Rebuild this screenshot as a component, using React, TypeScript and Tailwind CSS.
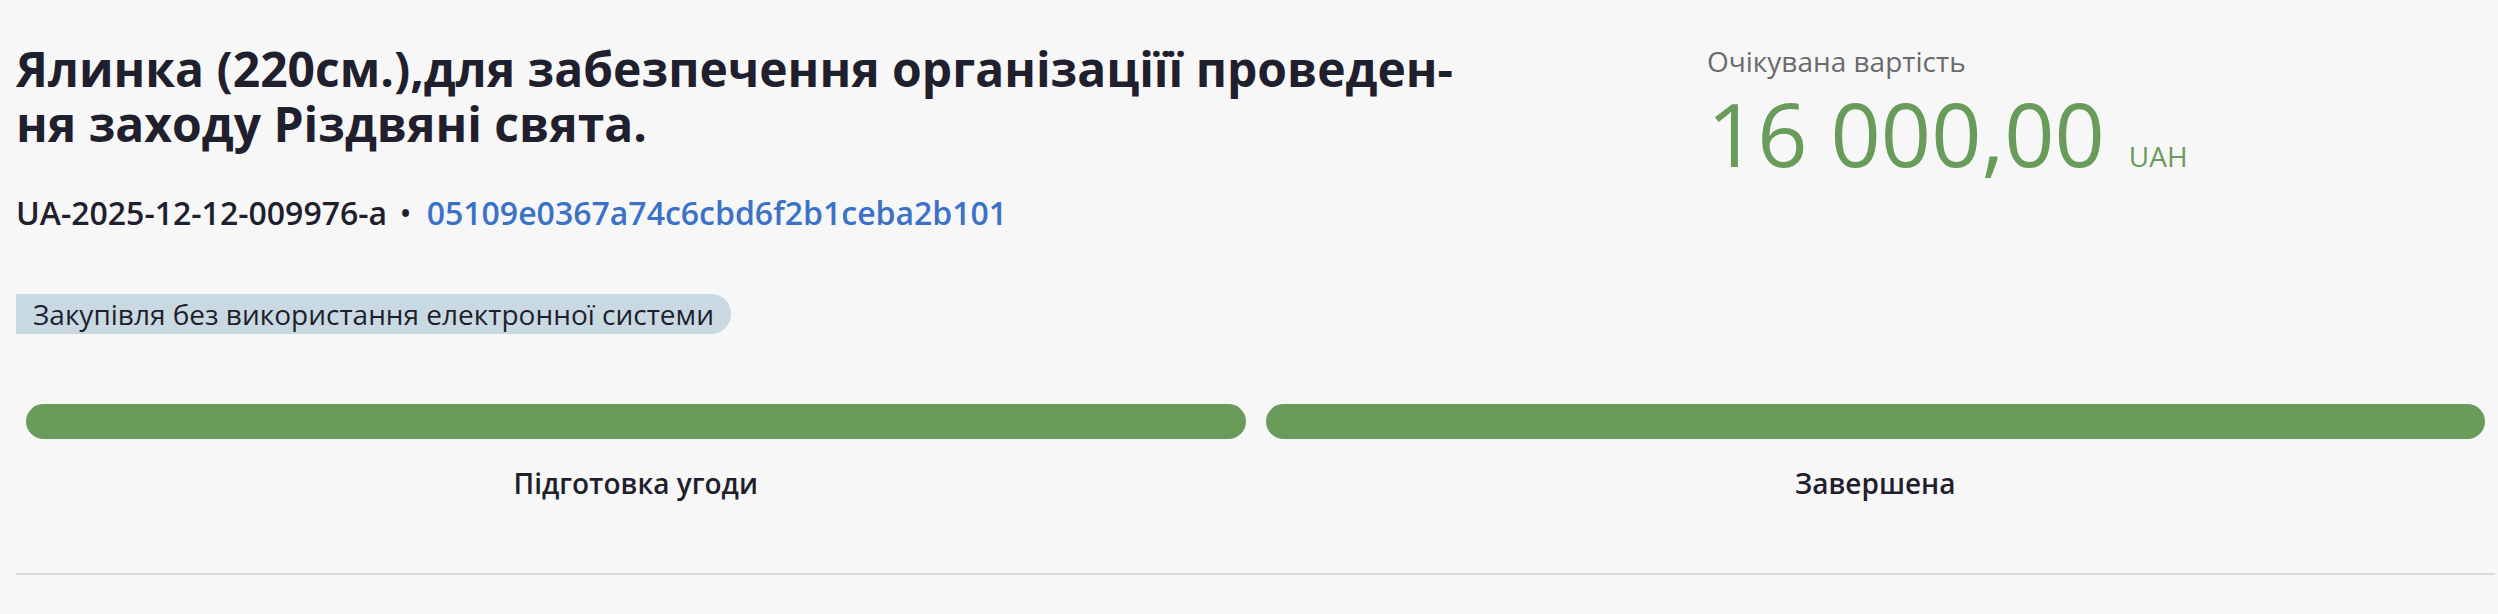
import React from "react";

export default function App() {
  const font = { fontFamily: '"Open Sans", "Noto Sans", sans-serif' };
  return (
    <div className="min-h-[614px] w-full bg-[#f7f7f7] text-[#1f1f2e]" style={font}>
      <div className="pl-[16px] pr-[3px]">
        <div className="flex">
          <div className="flex-1 pt-[41px]">
            <h1 className="text-[48px] font-bold leading-[55px] text-[#1f1f2e]">
              Ялинка (220см.),для забезпечення організаціїї проведен-
              <br />
              ня заходу Різдвяні свята.
            </h1>
            <div className="mt-[38px] flex items-center text-[32px] font-semibold leading-[48px]">
              <span>UA-2025-12-12-009976-a</span>
              <span className="ml-[13px] mr-[16px] text-[28px]">•</span>
              <span className="text-[#3b72c8]">05109e0367a74c6cbd6f2b1ceba2b101</span>
            </div>
            <div className="mt-[57px] flex">
              <span className="h-[40px] rounded-l-[8px] rounded-r-full bg-[#c9d9e1] px-[17px] text-[28px] leading-[40px] text-[#1f1f2e]">
                Закупівля без використання електронної системи
              </span>
            </div>
          </div>
          <div className="w-[788px] pt-[40px]">
            <div className="text-[28px] leading-[42px] text-[#6b6b6b]">Очікувана вартість</div>
            <div className="mt-[7px] flex items-baseline text-[#699b5a]">
              <span className="text-[88px] leading-[88px]">16 000,00</span>
              <span className="ml-[24px] text-[28px] leading-[42px]">UAH</span>
            </div>
          </div>
        </div>
        <div className="mt-[70px] grid grid-cols-2">
          <div className="flex flex-col items-center px-[10px]">
            <div className="h-[35px] w-full rounded-full bg-[#699b5a]" />
            <div className="mt-[23px] text-[28px] font-semibold leading-[42px]">Підготовка угоди</div>
          </div>
          <div className="flex flex-col items-center px-[10px]">
            <div className="h-[35px] w-full rounded-full bg-[#699b5a]" />
            <div className="mt-[23px] text-[28px] font-semibold leading-[42px]">Завершена</div>
          </div>
        </div>
        <div className="mt-[69px] h-[2px] bg-[#d9dadb]" />
      </div>
    </div>
  );
}
